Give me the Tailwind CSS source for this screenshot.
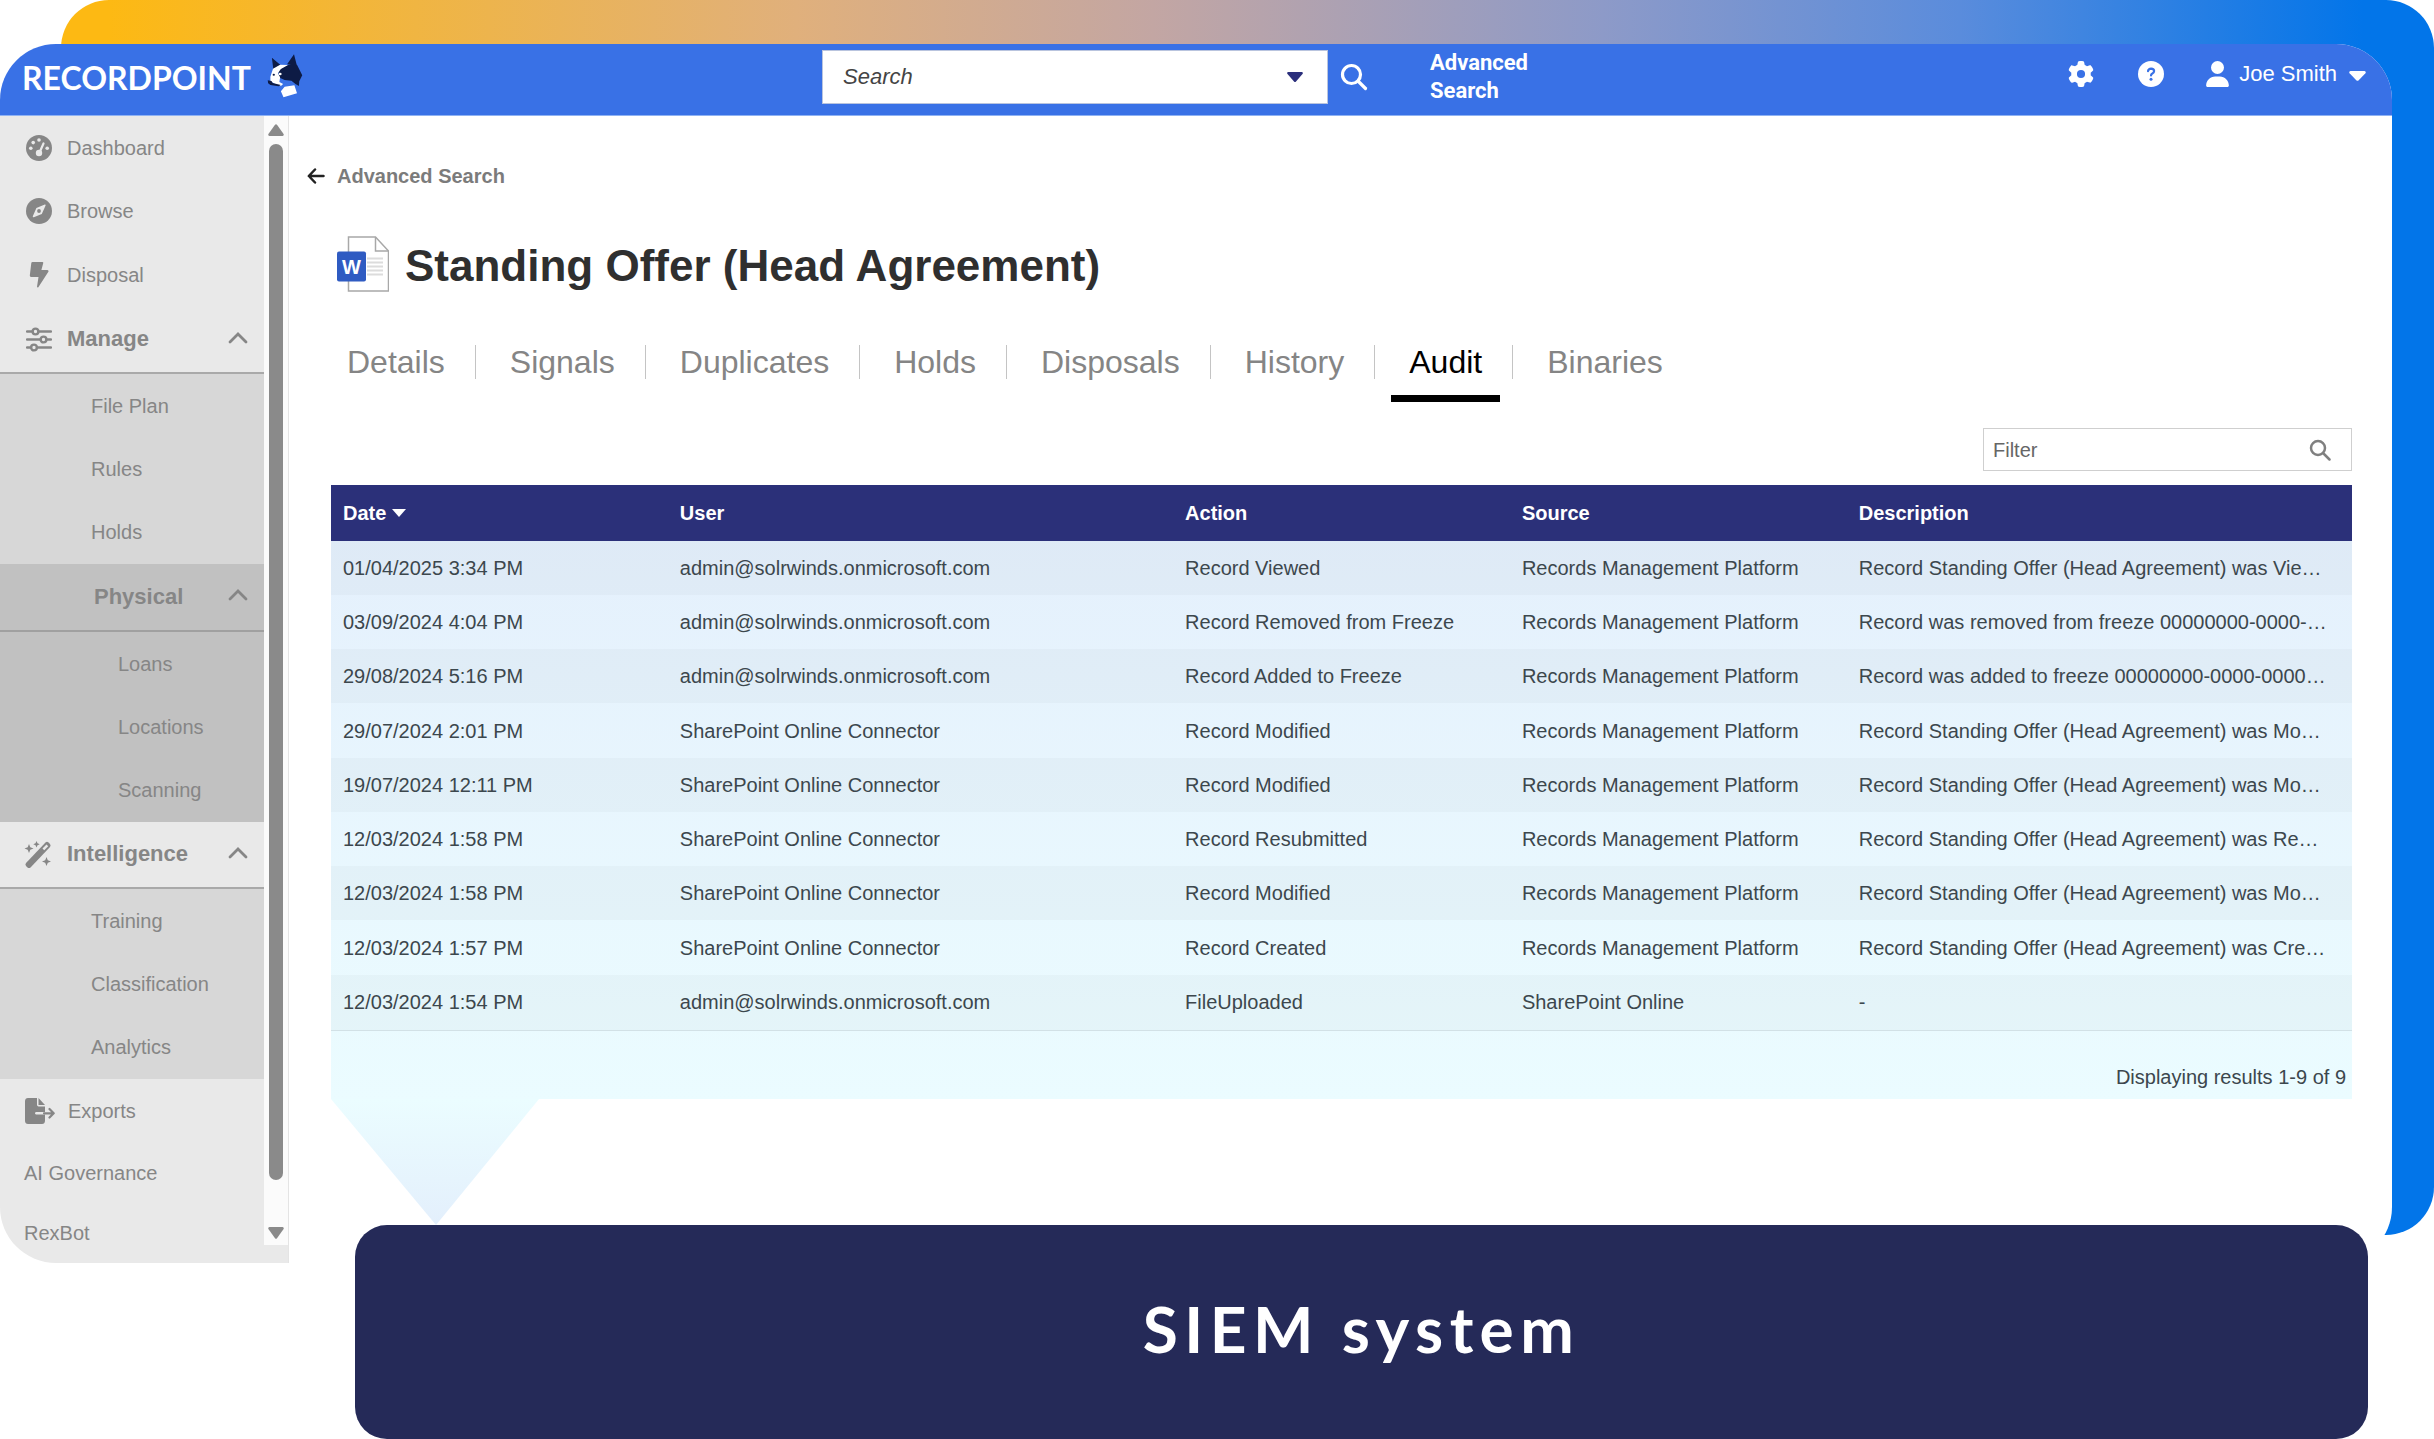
<!DOCTYPE html>
<html lang="en">
<head>
<meta charset="utf-8">
<title>RecordPoint – Audit</title>
<script src="https://cdn.jsdelivr.net/npm/@tailwindcss/browser@4"></script>
</head>
<body class="bg-white font-['Liberation_Sans',Arial,sans-serif] text-xl">
<div class="relative pt-11">
  <!-- gradient backdrop -->
  <div class="absolute top-0 right-0 left-[61px] h-[1235px] rounded-[48px] bg-[linear-gradient(to_right,#fdb913_2%,#e0b07c_31%,#c3a6a3_46%,#8d9ac8_65%,#5a8cdc_80%,#0275e9_97%)]"></div>

  <div class="relative mr-[42px] overflow-hidden rounded-[56px] bg-white">
    <header class="flex h-[72px] items-center justify-between border-b border-[#8fb2f3] bg-[#3971e6] text-white">
      <a href="#" class="flex flex-1 items-center gap-4 pb-1 pl-[22px]">
        <span class="font-['Lato',sans-serif] text-[32px] leading-10 font-bold">RECORDPOINT</span>
        <svg class="-mt-1 h-11 w-9" viewBox="53 10 96 132" preserveAspectRatio="none" aria-hidden="true">
          <path fill="#0d1b45" d="M66 21 89 43 70 57zM125 11 133 46 107 40zM84 58 108 42 133 42 147 74 139 92 138 106 129 100 118 90 100 88 84 80z"/>
          <path fill="#fff" d="M69 54 88 42 109 43 90 55 82 68 88 80 86 94 96 100 90 106 78 102 62 92 62 78zM90 122 100 108 126 104 133 128 97 140z"/>
          <path fill="#0d1b45" d="M55 89 65 91 68 97 90 103 84 107 62 103 56 98z"/>
          <circle cx="88" cy="70" r="4" fill="#fff"/><circle cx="71" cy="72" r="3" fill="#0d1b45"/>
        </svg>
      </a>
      <form class="mr-6 flex items-center pb-[5px]">
        <label class="flex h-[54px] w-[506px] items-center border border-[#b9c4de] bg-white pr-6 pl-5">
          <input type="text" aria-label="Search" placeholder="Search" class="min-w-0 flex-1 text-[22px] text-[#333] italic outline-none placeholder:text-[#444]">
          <svg class="h-2.5 w-4" viewBox="0 0 16 10" aria-hidden="true"><path fill="#2b2f7c" d="M1 0h14q1.500 .8 .5 2L9 9.500q-1 1-2 0L.5 2q-1-1.200 .5-2z"/></svg>
        </label>
        <button type="submit" aria-label="Run search" class="ml-3">
          <svg class="size-7" viewBox="0 0 28 28" fill="none" stroke="#fff" stroke-width="3.200" stroke-linecap="round" aria-hidden="true"><circle cx="11.500" cy="11.500" r="9"/><path d="m18.500 18.500 7 7"/></svg>
        </button>
        <a href="#" class="ml-[62px] w-28 font-['Roboto',sans-serif] text-[22px] leading-7 font-bold">Advanced Search</a>
      </form>
      <div class="flex flex-1 items-center justify-end pr-[26px] pb-[11px]">
        <button type="button" aria-label="Settings" class="mr-11"><svg class="size-[26px]" viewBox="0 0 512 512" fill="#fff"><path d="M495.9 166.6c3.2 8.7 .5 18.4-6.4 24.6l-43.3 39.4c1.1 8.3 1.7 16.8 1.7 25.400s-.6 17.100-1.7 25.400l43.3 39.400c6.900 6.200 9.600 15.900 6.400 24.600c-4.400 11.900-9.700 23.300-15.800 34.300l-4.700 8.100c-6.600 11-14 21.400-22.100 31.200c-5.900 7.200-15.700 9.600-24.500 6.800l-55.700-17.700c-13.400 10.300-28.200 18.900-44 25.400l-12.500 57.100c-2 9.100-9 16.300-18.200 17.800c-13.800 2.300-28 3.500-42.500 3.500s-28.700-1.200-42.500-3.500c-9.200-1.500-16.200-8.700-18.200-17.800l-12.500-57.100c-15.800-6.500-30.600-15.100-44-25.400L83.100 425.900c-8.800 2.800-18.600 .3-24.500-6.800c-8.100-9.800-15.500-20.200-22.100-31.200l-4.700-8.100c-6.100-11-11.400-22.400-15.800-34.300c-3.200-8.700-.5-18.400 6.400-24.600l43.300-39.400C64.600 273.100 64 264.600 64 256s.6-17.100 1.700-25.400L22.400 191.200c-6.900-6.200-9.600-15.900-6.400-24.600c4.400-11.900 9.700-23.300 15.800-34.300l4.700-8.100c6.600-11 14-21.400 22.100-31.200c5.900-7.200 15.700-9.600 24.500-6.800l55.700 17.700c13.400-10.300 28.200-18.900 44-25.400l12.500-57.100c2-9.100 9-16.300 18.200-17.800C227.300 1.200 241.500 0 256 0s28.700 1.200 42.500 3.500c9.200 1.500 16.200 8.700 18.200 17.800l12.500 57.100c15.800 6.500 30.600 15.100 44 25.400l55.700-17.700c8.800-2.800 18.600-.3 24.500 6.800c8.100 9.800 15.500 20.200 22.100 31.200l4.700 8.100c6.100 11 11.400 22.400 15.800 34.300zM256 336a80 80 0 1 0 0-160 80 80 0 1 0 0 160z"/></svg></button>
        <button type="button" aria-label="Help" class="mr-[42px]"><svg class="size-[26px]" viewBox="0 0 26 26"><circle cx="13" cy="13" r="13" fill="#fff"/><path d="M10 10.200q.4-2.600 3.100-2.600 3 .1 3 2.500 0 1.600-1.700 2.400-1.400.7-1.400 2" fill="none" stroke="#3971e6" stroke-width="2.200" stroke-linecap="round"/><circle cx="13" cy="18.200" r="1.500" fill="#3971e6"/></svg></button>
        <button type="button" class="flex items-center gap-2.5 text-[22px] leading-7">
          <svg class="h-[26px] w-[23px]" viewBox="0 0 448 512" fill="#fff" aria-hidden="true"><path d="M224 256A128 128 0 1 0 224 0a128 128 0 1 0 0 256zm-45.700 48C79.800 304 0 383.800 0 482.300C0 498.700 13.300 512 29.700 512l388.600 0c16.400 0 29.700-13.300 29.700-29.700C448 383.800 368.200 304 269.700 304l-91.400 0z"/></svg>
          Joe Smith
          <svg class="mt-1 ml-0.5 h-2.5 w-[17px]" viewBox="0 0 17 10" fill="#fff" aria-hidden="true"><path d="M1.500 0h14q2 .5 .9 2.200L9.700 9.300q-1.200 1.100-2.400 0L.6 2.200Q-.5 .5 1.500 0z"/></svg>
        </button>
      </div>
    </header>

    <div class="flex">
      <aside class="flex w-[289px] shrink-0 border-r border-[#e4e4e4] bg-[#e9e9e9]">
        <nav class="flex-1 text-[#868686]">
          <a href="#" class="flex h-[63px] items-center gap-[15px] pl-[26px]">
            <svg class="size-[26px]" viewBox="0 0 26 26" aria-hidden="true"><circle cx="13" cy="13" r="13" fill="#868686"/><g fill="#e9e9e9"><circle cx="13" cy="5" r="1.800"/><circle cx="7.200" cy="7.600" r="1.800"/><circle cx="4.800" cy="13.200" r="1.800"/><circle cx="21.200" cy="13.200" r="1.800"/><circle cx="13" cy="18" r="3.200"/></g><path d="m13.500 17.500 4-9" stroke="#e9e9e9" stroke-width="2.200" stroke-linecap="round"/></svg>
            Dashboard</a>
          <a href="#" class="flex h-16 items-center gap-[15px] pl-[26px]">
            <svg class="size-[26px]" viewBox="0 0 26 26" aria-hidden="true"><circle cx="13" cy="13" r="13" fill="#868686"/><path fill="#e9e9e9" d="m18.800 6.600-8.400 3.400-3.600 8.300q-.2 1.200 1 1l8-3.200 3.800-8.500q.2-1.200-.8-1z"/><circle cx="13" cy="13" r="1.900" fill="#868686"/></svg>
            Browse</a>
          <a href="#" class="flex h-16 items-center gap-[15px] pl-[26px]">
            <svg class="size-[26px]" viewBox="0 0 26 26" fill="#868686" aria-hidden="true"><path d="M6.500 0h10q1 .2 .7 1.300L15.400 8h6q1.800 .5 .8 2L12.500 25q-1 1.200-1.500-.2L12.500 15H5q-1.200-.2-1.200-1.400L5.300 1q.2-.9 1.200-1z"/></svg>
            Disposal</a>
          <button type="button" aria-expanded="true" class="flex h-[67px] w-full items-center border-b-2 border-[#a9a9a9] pr-4 pl-[26px] text-[22px] font-bold">
            <svg class="mr-[15px] size-[26px]" viewBox="0 0 26 26" fill="none" stroke="#868686" stroke-width="2.400" stroke-linecap="round" aria-hidden="true"><path d="M1 4.500h5.500M12.500 4.500H25M1 12.500h13.500M20.500 12.500H25M1 20.500h4M11 20.500h14"/><circle cx="9.500" cy="4.500" r="2.900"/><circle cx="17.500" cy="12.500" r="2.900"/><circle cx="8" cy="20.500" r="2.900"/></svg>
            Manage
            <svg class="mb-1 ml-auto h-3 w-5" viewBox="0 0 20 12" fill="none" stroke="#868686" stroke-width="2.800" stroke-linecap="round" aria-hidden="true"><path d="m2 10 8-8 8 8"/></svg></button>
          <div class="bg-[#d7d7d7]">
            <a href="#" class="flex h-[63px] items-center pl-[91px]">File Plan</a>
            <a href="#" class="flex h-[63px] items-center pl-[91px]">Rules</a>
            <a href="#" class="flex h-16 items-center pl-[91px]">Holds</a>
          </div>
          <button type="button" aria-expanded="true" class="flex h-[68px] w-full items-center border-b-2 border-[#a0a0a0] bg-[#c1c1c1] pr-4 pl-[94px] text-[22px] font-bold">
            Physical
            <svg class="mb-1 ml-auto h-3 w-5" viewBox="0 0 20 12" fill="none" stroke="#868686" stroke-width="2.800" stroke-linecap="round" aria-hidden="true"><path d="m2 10 8-8 8 8"/></svg></button>
          <div class="bg-[#c1c1c1]">
            <a href="#" class="flex h-[63px] items-center pl-[118px]">Loans</a>
            <a href="#" class="flex h-[63px] items-center pl-[118px]">Locations</a>
            <a href="#" class="flex h-16 items-center pl-[118px]">Scanning</a>
          </div>
          <button type="button" aria-expanded="true" class="flex h-[67px] w-full items-center border-b-2 border-[#a9a9a9] pr-4 pl-6 text-[22px] font-bold">
            <svg class="mr-[15px] size-7" viewBox="0 0 28 28" fill="#868686" aria-hidden="true"><path d="M21.500 1.500q1.500-1.300 3 0l1.500 1.500q1.200 1.500 0 3L6.500 26.500q-1.500 1.200-3 0L2 25q-1.200-1.500 0-3z"/><path d="m18.500 7.500 4-4 1.700 1.700-4 4z" fill="#e9e9e9"/><path d="m5 3 1.300 3.200L9.500 7.500 6.300 8.800 5 12 3.700 8.800.5 7.500l3.200-1.300zM12.500 0l1 2.200 2.200 1-2.200 1-1 2.200-1-2.200-2.200-1 2.200-1zM22.500 16l1.300 3.200 3.200 1.300-3.200 1.300L22.500 25l-1.300-3.200-3.200-1.300 3.200-1.300z"/></svg>
            Intelligence
            <svg class="mb-1 ml-auto h-3 w-5" viewBox="0 0 20 12" fill="none" stroke="#868686" stroke-width="2.800" stroke-linecap="round" aria-hidden="true"><path d="m2 10 8-8 8 8"/></svg></button>
          <div class="bg-[#d7d7d7]">
            <a href="#" class="flex h-[63px] items-center pl-[91px]">Training</a>
            <a href="#" class="flex h-[63px] items-center pl-[91px]">Classification</a>
            <a href="#" class="flex h-16 items-center pl-[91px]">Analytics</a>
          </div>
          <a href="#" class="flex h-16 items-center gap-[13px] pl-[25px]">
            <svg class="h-[26px] w-[30px]" viewBox="0 0 30 26" fill="#868686" aria-hidden="true"><path d="M3 0h9v7q.2 1.300 1.500 1.500H20V14h-9q-1 .2-1 1.300t1 1.200h9V23q-.2 2.800-3 3H3q-2.800-.2-3-3V3Q.2.200 3 0z"/><path d="m13.500 0 6.500 7h-6.500z"/><path d="M19 15.300h9.500m-4-4.300 4.200 4.300-4.200 4.200" fill="none" stroke="#868686" stroke-width="2.200" stroke-linecap="round" stroke-linejoin="round"/></svg>
            Exports</a>
          <a href="#" class="flex h-[60px] items-center pl-6">AI Governance</a>
          <a href="#" class="flex h-[60px] items-center pl-6">RexBot</a>
        </nav>
        <div class="mb-[18px] flex w-6 flex-col items-center bg-[#fbfbfb] pt-2 pb-1.5" aria-hidden="true">
          <svg class="h-3 w-4" viewBox="0 0 16 12" fill="#8a8a8a"><path d="M7 .8q1-1 2 0l6.600 9.200q.6 1.500-1 2H1.400q-1.600-.5-1-2z"/></svg>
          <div class="mt-2 mb-[47px] w-3.5 flex-1 rounded-full bg-[#8a8a8a]"></div>
          <svg class="h-3 w-4" viewBox="0 0 16 12" fill="#8a8a8a"><path d="M7 11.200q1 1 2 0L15.600 2q.6-1.500-1-2H1.400Q-.2.500.4 2z"/></svg>
        </div>
      </aside>

      <main class="min-w-0 flex-1 pr-10 pl-[42px]">
        <a href="#" class="mt-[45px] -ml-6 flex h-[30px] w-fit items-center gap-3 font-bold text-[#7b7b7b]">
          <svg class="h-4 w-[18px]" viewBox="0 0 18 16" fill="none" stroke="#222" stroke-width="2.500" stroke-linecap="round" stroke-linejoin="round" aria-hidden="true"><path d="M16.500 8H2m6-6.500L1.800 8 8 14.500"/></svg>
          Advanced Search</a>
        <h1 class="mt-[46px] flex h-[58px] items-center gap-4 pl-1.5 text-[44px] font-bold text-[#2f2f2f]">
          <svg class="mb-1 h-14 w-[52px]" viewBox="0 0 52 56" aria-hidden="true"><path d="M11.500 1h27l13 14v40h-40z" fill="#fff" stroke="#a8a8a8" stroke-width="1.500"/><path d="M38.500 1v14h13" fill="none" stroke="#a8a8a8" stroke-width="1.500"/><path d="M30 22.500h16M30 26.500h16M30 30.500h16M30 34.500h16M30 38.500h16" stroke="#dcdcdc" stroke-width="2"/><rect y="15.500" width="29" height="30" rx="2" fill="#2f5bc2"/><text x="14.500" y="38" text-anchor="middle" font-family="Liberation Sans" font-weight="bold" font-size="20" fill="#fff">W</text></svg>
          Standing Offer (Head Agreement)</h1>

        <ul class="mt-[50px] -ml-[18px] flex text-[32px] leading-[34px] text-[#858585]">
          <li class="flex items-start"><a href="#" class="mr-3 ml-4 border-b-[7px] border-transparent px-[18px] pb-4">Details</a><span class="h-[34px] w-px bg-[#c4c4c4]"></span></li>
          <li class="flex items-start"><a href="#" class="mr-3 ml-4 border-b-[7px] border-transparent px-[18px] pb-4">Signals</a><span class="h-[34px] w-px bg-[#c4c4c4]"></span></li>
          <li class="flex items-start"><a href="#" class="mr-3 ml-4 border-b-[7px] border-transparent px-[18px] pb-4">Duplicates</a><span class="h-[34px] w-px bg-[#c4c4c4]"></span></li>
          <li class="flex items-start"><a href="#" class="mr-3 ml-4 border-b-[7px] border-transparent px-[18px] pb-4">Holds</a><span class="h-[34px] w-px bg-[#c4c4c4]"></span></li>
          <li class="flex items-start"><a href="#" class="mr-3 ml-4 border-b-[7px] border-transparent px-[18px] pb-4">Disposals</a><span class="h-[34px] w-px bg-[#c4c4c4]"></span></li>
          <li class="flex items-start"><a href="#" class="mr-3 ml-4 border-b-[7px] border-transparent px-[18px] pb-4">History</a><span class="h-[34px] w-px bg-[#c4c4c4]"></span></li>
          <li class="flex items-start"><a href="#" aria-current="page" class="mr-3 ml-4 border-b-[7px] border-black px-[18px] pb-4 text-black">Audit</a><span class="h-[34px] w-px bg-[#c4c4c4]"></span></li>
          <li class="flex items-start"><a href="#" class="mr-3 ml-4 border-b-[7px] border-transparent px-[18px] pb-4">Binaries</a></li>
        </ul>

        <label class="mt-[26px] ml-auto flex h-[43px] w-[369px] items-center border border-[#cfcfcf] bg-white pr-5 pl-[9px]">
          <input type="text" aria-label="Filter" placeholder="Filter" class="min-w-0 flex-1 text-xl text-[#333] outline-none placeholder:text-[#666]">
          <svg class="size-[22px]" viewBox="0 0 22 22" fill="none" stroke="#808080" stroke-width="2.500" stroke-linecap="round" aria-hidden="true"><circle cx="9" cy="9" r="7"/><path d="m14.500 14.500 6 6"/></svg>
        </label>

        <div class="mt-3.5 bg-linear-to-b from-[#e4effc] to-[#ebfcff] text-[#3c474d]">
          <table class="w-full table-fixed border-collapse border-b border-[#d2e1e6] text-left">
            <colgroup><col class="w-2/12"><col class="w-3/12"><col class="w-2/12"><col class="w-2/12"><col class="w-3/12"></colgroup>
            <thead class="bg-[#2b3079] text-white">
              <tr class="h-14">
                <th class="px-3 font-bold"><button type="button" class="flex items-center gap-1.5">Date <svg class="h-2 w-3.5" viewBox="0 0 14 8" fill="#fff" aria-hidden="true"><path d="M0 0h14L7 8z"/></svg></button></th>
                <th class="px-3 font-bold">User</th><th class="px-3 font-bold">Action</th><th class="px-3 font-bold">Source</th><th class="px-3 font-bold">Description</th>
              </tr>
            </thead>
            <tbody class="whitespace-nowrap">
              <tr class="h-[54px] odd:bg-black/[0.025]"><td class="px-3">01/04/2025 3:34 PM</td><td class="px-3">admin@solrwinds.onmicrosoft.com</td><td class="px-3">Record Viewed</td><td class="px-3">Records Management Platform</td><td class="px-3">Record Standing Offer (Head Agreement) was Vie…</td></tr>
              <tr class="h-[54px] odd:bg-black/[0.025]"><td class="px-3">03/09/2024 4:04 PM</td><td class="px-3">admin@solrwinds.onmicrosoft.com</td><td class="px-3">Record Removed from Freeze</td><td class="px-3">Records Management Platform</td><td class="px-3">Record was removed from freeze 00000000-0000-…</td></tr>
              <tr class="h-[54px] odd:bg-black/[0.025]"><td class="px-3">29/08/2024 5:16 PM</td><td class="px-3">admin@solrwinds.onmicrosoft.com</td><td class="px-3">Record Added to Freeze</td><td class="px-3">Records Management Platform</td><td class="px-3">Record was added to freeze 00000000-0000-0000…</td></tr>
              <tr class="h-[55px] odd:bg-black/[0.025]"><td class="px-3">29/07/2024 2:01 PM</td><td class="px-3">SharePoint Online Connector</td><td class="px-3">Record Modified</td><td class="px-3">Records Management Platform</td><td class="px-3">Record Standing Offer (Head Agreement) was Mo…</td></tr>
              <tr class="h-[54px] odd:bg-black/[0.025]"><td class="px-3">19/07/2024 12:11 PM</td><td class="px-3">SharePoint Online Connector</td><td class="px-3">Record Modified</td><td class="px-3">Records Management Platform</td><td class="px-3">Record Standing Offer (Head Agreement) was Mo…</td></tr>
              <tr class="h-[54px] odd:bg-black/[0.025]"><td class="px-3">12/03/2024 1:58 PM</td><td class="px-3">SharePoint Online Connector</td><td class="px-3">Record Resubmitted</td><td class="px-3">Records Management Platform</td><td class="px-3">Record Standing Offer (Head Agreement) was Re…</td></tr>
              <tr class="h-[54px] odd:bg-black/[0.025]"><td class="px-3">12/03/2024 1:58 PM</td><td class="px-3">SharePoint Online Connector</td><td class="px-3">Record Modified</td><td class="px-3">Records Management Platform</td><td class="px-3">Record Standing Offer (Head Agreement) was Mo…</td></tr>
              <tr class="h-[55px] odd:bg-black/[0.025]"><td class="px-3">12/03/2024 1:57 PM</td><td class="px-3">SharePoint Online Connector</td><td class="px-3">Record Created</td><td class="px-3">Records Management Platform</td><td class="px-3">Record Standing Offer (Head Agreement) was Cre…</td></tr>
              <tr class="h-[55px] odd:bg-black/[0.025]"><td class="px-3">12/03/2024 1:54 PM</td><td class="px-3">admin@solrwinds.onmicrosoft.com</td><td class="px-3">FileUploaded</td><td class="px-3">SharePoint Online</td><td class="px-3">-</td></tr>
            </tbody>
          </table>
          <p class="flex h-[68px] items-center justify-end pt-6 pr-1.5">Displaying results 1-9 of 9</p>
        </div>
        <!-- pointer from the table to the banner -->
        <svg class="h-[126px] w-[208px]" viewBox="0 0 208 126" aria-hidden="true"><defs><linearGradient id="pointer" x1="0" y1="0" x2="0" y2="1"><stop offset="0" stop-color="#ebfdff"/><stop offset="1" stop-color="#e3effc"/></linearGradient></defs><path d="M0 0h208L105 126z" fill="url(#pointer)"/></svg>
      </main>
    </div>
  </div>

  <section class="relative -mt-[38px] mr-[66px] ml-[355px] flex h-[214px] items-center justify-center rounded-[32px] bg-[#252a58] pb-1.5 text-white">
    <h2 class="font-['Lato',sans-serif] text-[64px] leading-[76px] font-bold tracking-widest">SIEM system</h2>
  </section>
</div>
</body>
</html>
